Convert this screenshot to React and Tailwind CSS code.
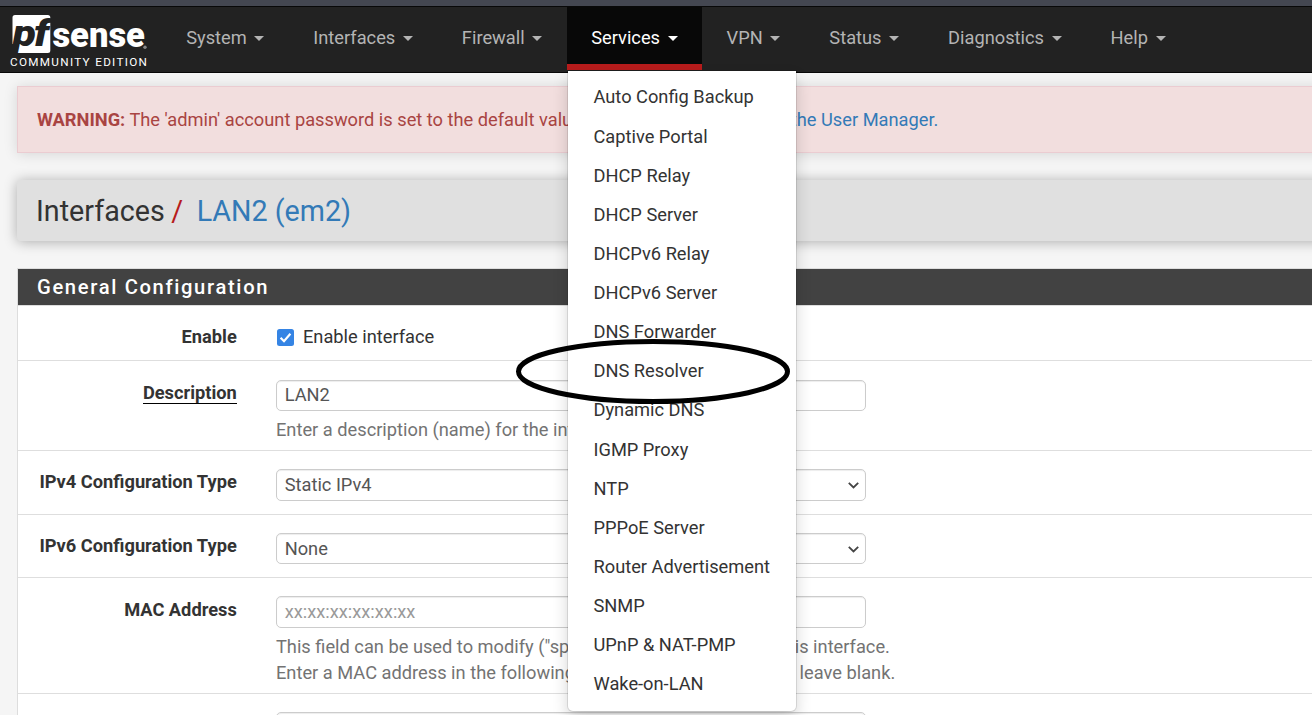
const navItems = ['System', 'Interfaces', 'Firewall', 'Services', 'VPN', 'Status', 'Diagnostics', 'Help'];

const serviceItems = [
  'Auto Config Backup', 'Captive Portal', 'DHCP Relay', 'DHCP Server', 'DHCPv6 Relay',
  'DHCPv6 Server', 'DNS Forwarder', 'DNS Resolver', 'Dynamic DNS', 'IGMP Proxy', 'NTP',
  'PPPoE Server', 'Router Advertisement', 'SNMP', 'UPnP & NAT-PMP', 'Wake-on-LAN',
];

function Logo() {
  return (
    <div className="w-[161.7px] shrink-0">
      <svg className="block h-[48px] w-[150px] overflow-visible" viewBox="0 7 150 48">
        <path d="M15 15H47.8Q50.3 15 50.3 17.5V50.5Q50.3 53 47.8 53H16L19 44L12.5 44V17.5Q12.5 15 15 15Z" fill="#fff" />
        <text x="12.6" y="46" fontFamily="Roboto, sans-serif" fontSize="36" fontWeight="900" fontStyle="italic" textLength="23.5" lengthAdjust="spacingAndGlyphs" fill="#222">p</text>
        <text x="34" y="46" fontFamily="Roboto, sans-serif" fontSize="36" fontWeight="900" fontStyle="italic" textLength="15" lengthAdjust="spacingAndGlyphs" fill="#222">f</text>
        <text x="52.4" y="46.6" fontFamily="Roboto, sans-serif" fontSize="35.5" fontWeight="900" textLength="92.5" lengthAdjust="spacingAndGlyphs" fill="#fff">sense</text>
        <circle cx="145" cy="47.3" r="1.7" fill="#888" />
      </svg>
      <div className="ml-[10px] whitespace-nowrap text-[11.7px] leading-[14px] tracking-[1.32px] text-white">COMMUNITY EDITION</div>
    </div>
  );
}

function Caret() {
  return (
    <svg className="ml-[7.6px] mt-[2px] h-[5px] w-[10px]" viewBox="0 0 10 5">
      <path d="M0 0H10L5 5Z" fill="currentColor" />
    </svg>
  );
}

function ServicesMenu() {
  return (
    <ul className="absolute left-[1px] top-[64px] z-20 h-[640px] w-[228px] rounded-b-[5px] bg-white pt-[6.4px] shadow-[0_8px_16px_rgba(0,0,0,0.175),0_0_0_1px_rgba(0,0,0,0.1)]">
      {serviceItems.map((s) => (
        <li key={s} className="h-[39.13px] whitespace-nowrap pl-[25.8px] leading-[39.13px] text-[#333]">{s}</li>
      ))}
    </ul>
  );
}

function Row({ label, height, underline, labelTop, children }) {
  return (
    <div className={`flex border-b border-[#dedede] ${height}`}>
      <div className={`w-[218.8px] shrink-0 text-right font-bold leading-[26px] ${labelTop}`}>
        <span className={underline ? 'inline-block border-b border-black leading-[21px]' : ''}>{label}</span>
      </div>
      <div className="ml-[39.2px] whitespace-nowrap">{children}</div>
    </div>
  );
}

function Field({ value, select, placeholder, className }) {
  return (
    <div className={`flex w-[590px] items-center justify-between rounded-[5px] border border-[#ccc] bg-white pl-[7.7px] pr-[6px] shadow-[inset_0_1px_1px_rgba(0,0,0,0.075)] ${placeholder ? 'text-[#999]' : 'text-[#555]'} ${className}`}>
      <span>{value}</span>
      {select && (
        <svg className="mt-[1px] h-[7px] w-[11px]" viewBox="0 0 11 7" fill="none" stroke="#444" strokeWidth="1.8">
          <path d="M0.8 0.8L5.5 5.5L10.2 0.8" />
        </svg>
      )}
    </div>
  );
}

export default function App() {
  return (
    <div className="relative h-[715px] w-[1312px] overflow-hidden bg-[#f5f5f5] font-[Roboto,sans-serif] text-[18.26px] leading-[26px] text-[#333]">
      <div className="h-[6px] bg-[#444751]" />
      <nav className="flex h-[67px] border-y border-[#080808] bg-[#222]">
        <Logo />
        {navItems.map((n) => {
          const active = n === 'Services';
          return (
            <div key={n} className={`relative flex items-center whitespace-nowrap px-[24.5px] ${active ? 'h-[63px] border-b-[6px] border-[#b71c1c] bg-[#080808] pt-[4px] text-white' : 'pb-[4px] text-[#b4b4b4]'}`}>
              {n}
              <Caret />
              {active && <ServicesMenu />}
            </div>
          );
        })}
      </nav>
      <main className="w-[1400px] pl-[17px]">
        <div className="mt-[13px] h-[67px] whitespace-nowrap border border-[#ebccd1] bg-[#f2dede] pl-[19px] leading-[65px] text-[#a94442] shadow-[0_1px_13px_rgba(0,0,0,0.13)]">
          <b>WARNING:</b> The 'admin' account password is set to the default value. <span className="text-[#337ab7]">Change the password in the User Manager.</span>
        </div>
        <h1 className="mt-[27px] flex h-[61px] items-center rounded-[4px] bg-[#e0e0e0] pl-[19px] text-[28.7px] shadow-[0_1px_13px_rgba(0,0,0,0.3)]">
          <span>Interfaces</span>
          <span className="ml-[6.5px] text-[#b71c1c]">/</span>
          <span className="ml-[13.5px] text-[#337ab7]">LAN2 (em2)</span>
        </h1>
        <section className="mt-[27px] border border-[#ddd] bg-white">
          <h2 className="h-[36px] bg-[#424242] pl-[19px] text-[20.2px] font-medium leading-[36px] tracking-[1.65px] text-white">General Configuration</h2>
          <div className="border-t border-[#ddd]">
            <Row label="Enable" height="h-[55px]" labelTop="pt-[18px]">
              <div className="flex items-center pl-[1px] pt-[18px]">
                <svg className="mr-[9px] h-[17px] w-[17px]" viewBox="0 0 17 17">
                  <rect width="17" height="17" rx="2.5" fill="#3584e4" />
                  <path d="M3.6 8.8L7 12.2L13.4 4.8" fill="none" stroke="#fff" strokeWidth="2.2" />
                </svg>
                Enable interface
              </div>
            </Row>
            <Row label="Description" height="h-[90px]" labelTop="pt-[19px]" underline>
              <Field value="LAN2" className="mt-[19px] h-[31px] pb-[1px]" />
              <div className="mt-[6px] text-[#737373]">Enter a description (name) for the interface here.</div>
            </Row>
            <Row label="IPv4 Configuration Type" height="h-[64px]" labelTop="pt-[18px]">
              <Field value="Static IPv4" select className="mt-[18px] h-[32px]" />
            </Row>
            <Row label="IPv6 Configuration Type" height="h-[63px]" labelTop="pt-[18px]">
              <Field value="None" select className="mt-[18px] h-[31px]" />
            </Row>
            <Row label="MAC Address" height="h-[116px]" labelTop="pt-[19px]">
              <Field value="xx:xx:xx:xx:xx:xx" placeholder className="mt-[18px] h-[32px]" />
              <div className="mt-[6px] text-[#737373]">
                This field can be used to modify ("spoof") the MAC address of this interface.<br />
                Enter a MAC address in the following format: xx:xx:xx:xx:xx:xx or leave blank.
              </div>
            </Row>
            <Row label="" height="h-[63px]" labelTop="">
              <Field value="" className="mt-[18px] h-[31px]" />
            </Row>
          </div>
        </section>
      </main>
      <svg className="absolute left-[515px] top-[338px] z-30 h-[67px] w-[276px]" viewBox="0 0 276 67">
        <ellipse cx="138" cy="33.5" rx="134.5" ry="30" fill="none" stroke="#000" strokeWidth="5" />
      </svg>
    </div>
  );
}
